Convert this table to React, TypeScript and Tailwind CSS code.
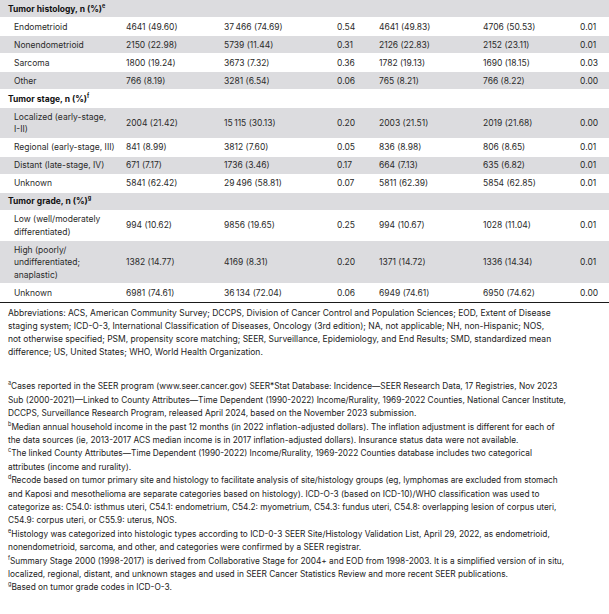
import React from "react";

type Row =
  | { kind: "head"; label: React.ReactNode }
  | { kind: "data"; label: React.ReactNode; v: string[] };

const T = "\u2009";

const Sup = ({ c }: { c: string }) => (
  <sup className="text-[5.5px] leading-none align-top relative top-[1px]">{c}</sup>
);

const rows: Row[] = [
  { kind: "head", label: <>Tumor histology, n (%)<Sup c="e" /></> },
  { kind: "data", label: "Endometrioid", v: ["4641 (49.60)", `37${T}466 (74.69)`, "0.54", "4641 (49.83)", "4706 (50.53)", "0.01"] },
  { kind: "data", label: "Nonendometrioid", v: ["2150 (22.98)", "5739 (11.44)", "0.31", "2126 (22.83)", "2152 (23.11)", "0.01"] },
  { kind: "data", label: "Sarcoma", v: ["1800 (19.24)", "3673 (7.32)", "0.36", "1782 (19.13)", "1690 (18.15)", "0.03"] },
  { kind: "data", label: "Other", v: ["766 (8.19)", "3281 (6.54)", "0.06", "765 (8.21)", "766 (8.22)", "0.00"] },
  { kind: "head", label: <>Tumor stage, n (%)<Sup c="f" /></> },
  { kind: "data", label: <>Localized (early-stage,<br />I-II)</>, v: ["2004 (21.42)", `15${T}115 (30.13)`, "0.20", "2003 (21.51)", "2019 (21.68)", "0.00"] },
  { kind: "data", label: "Regional (early-stage, III)", v: ["841 (8.99)", "3812 (7.60)", "0.05", "836 (8.98)", "806 (8.65)", "0.01"] },
  { kind: "data", label: "Distant (late-stage, IV)", v: ["671 (7.17)", "1736 (3.46)", "0.17", "664 (7.13)", "635 (6.82)", "0.01"] },
  { kind: "data", label: "Unknown", v: ["5841 (62.42)", `29${T}496 (58.81)`, "0.07", "5811 (62.39)", "5854 (62.85)", "0.01"] },
  { kind: "head", label: <>Tumor grade, n (%)<Sup c="g" /></> },
  { kind: "data", label: <>Low (well/moderately<br />differentiated)</>, v: ["994 (10.62)", "9856 (19.65)", "0.25", "994 (10.67)", "1028 (11.04)", "0.01"] },
  { kind: "data", label: <>High (poorly/<br />undifferentiated;<br />anaplastic)</>, v: ["1382 (14.77)", "4169 (8.31)", "0.20", "1371 (14.72)", "1336 (14.34)", "0.01"] },
  { kind: "data", label: "Unknown", v: ["6981 (74.61)", `36${T}134 (72.04)`, "0.06", "6949 (74.61)", "6950 (74.62)", "0.00"] },
];

const notes: { sup?: string; lines: string[] }[] = [
  {
    sup: "a",
    lines: [
      "Cases reported in the SEER program (www.seer.cancer.gov) SEER*Stat Database: Incidence\u2014SEER Research Data, 17 Registries, Nov 2023",
      "Sub (2000-2021)\u2014Linked to County Attributes\u2014Time Dependent (1990-2022) Income/Rurality, 1969-2022 Counties, National Cancer Institute,",
      "DCCPS, Surveillance Research Program, released April 2024, based on the November 2023 submission.",
    ],
  },
  {
    sup: "b",
    lines: [
      "Median annual household income in the past 12 months (in 2022 inflation-adjusted dollars). The inflation adjustment is different for each of",
      "the data sources (ie, 2013-2017 ACS median income is in 2017 inflation-adjusted dollars). Insurance status data were not available.",
    ],
  },
  {
    sup: "c",
    lines: [
      "The linked County Attributes\u2014Time Dependent (1990-2022) Income/Rurality, 1969-2022 Counties database includes two categorical",
      "attributes (income and rurality).",
    ],
  },
  {
    sup: "d",
    lines: [
      "Recode based on tumor primary site and histology to facilitate analysis of site/histology groups (eg, lymphomas are excluded from stomach",
      "and Kaposi and mesothelioma are separate categories based on histology). ICD-O-3 (based on ICD-10)/WHO classification was used to",
      "categorize as: C54.0: isthmus uteri, C54.1: endometrium, C54.2: myometrium, C54.3: fundus uteri, C54.8: overlapping lesion of corpus uteri,",
      "C54.9: corpus uteri, or C55.9: uterus, NOS.",
    ],
  },
  {
    sup: "e",
    lines: [
      "Histology was categorized into histologic types according to ICD-0-3 SEER Site/Histology Validation List, April 29, 2022, as endometrioid,",
      "nonendometrioid, sarcoma, and other, and categories were confirmed by a SEER registrar.",
    ],
  },
  {
    sup: "f",
    lines: [
      "Summary Stage 2000 (1998-2017) is derived from Collaborative Stage for 2004+ and EOD from 1998-2003. It is a simplified version of in situ,",
      "localized, regional, distant, and unknown stages and used in SEER Cancer Statistics Review and more recent SEER publications.",
    ],
  },
  { sup: "g", lines: ["Based on tumor grade codes in ICD-O-3."] },
];

const abbrev = [
  "Abbreviations: ACS, American Community Survey; DCCPS, Division of Cancer Control and Population Sciences; EOD, Extent of Disease",
  "staging system; ICD-O-3, International Classification of Diseases, Oncology (3rd edition); NA, not applicable; NH, non-Hispanic; NOS,",
  "not otherwise specified; PSM, propensity score matching; SEER, Surveillance, Epidemiology, and End Results; SMD, standardized mean",
  "difference; US, United States; WHO, World Health Organization.",
];

const grid = "grid grid-cols-[126px_98px_113px_42px_104px_97px_1fr] items-center";

export default function App() {
  return (
    <div
      className="w-[609px] h-[614px] bg-white text-[#2a2a2a] text-[8.5px] leading-[12.5px] overflow-hidden"
      style={{ fontFamily: "Inter, 'Liberation Sans', sans-serif" }}
    >
      <div className="border-b border-[#1a1a1a]">
        {rows.map((r, i) => {
          const bg = i % 2 === 0 ? "bg-[#dcdcdf]" : "bg-white";
          if (r.kind === "head") {
            return (
              <div key={i} className={`${bg} border-b border-white pt-[2.5px] pb-[2px] pl-[8px] font-bold text-[#111]`}>
                {r.label}
              </div>
            );
          }
          return (
            <div key={i} className={`${grid} ${bg} border-b border-white pt-[2.5px] pb-[2px]`}>
              <div className="pl-[14px] whitespace-nowrap">{r.label}</div>
              {r.v.map((v, j) => (
                <div key={j} className="whitespace-nowrap">{v}</div>
              ))}
            </div>
          );
        })}
      </div>
      <div className="pl-[8px] pt-[3.5px] text-[#222] leading-[13.2px]">
        {abbrev.map((l, i) => (
          <div key={i} className="whitespace-nowrap">{l}</div>
        ))}
      </div>
      <div className="pl-[8px] mt-[21px] text-[#222] text-[8.3px] leading-[13.4px]">
        {notes.map((n, i) =>
          n.lines.map((l, j) => (
            <div key={`${i}-${j}`} className="whitespace-nowrap">
              {j === 0 && n.sup ? <Sup c={n.sup} /> : null}
              {l}
            </div>
          ))
        )}
      </div>
    </div>
  );
}
